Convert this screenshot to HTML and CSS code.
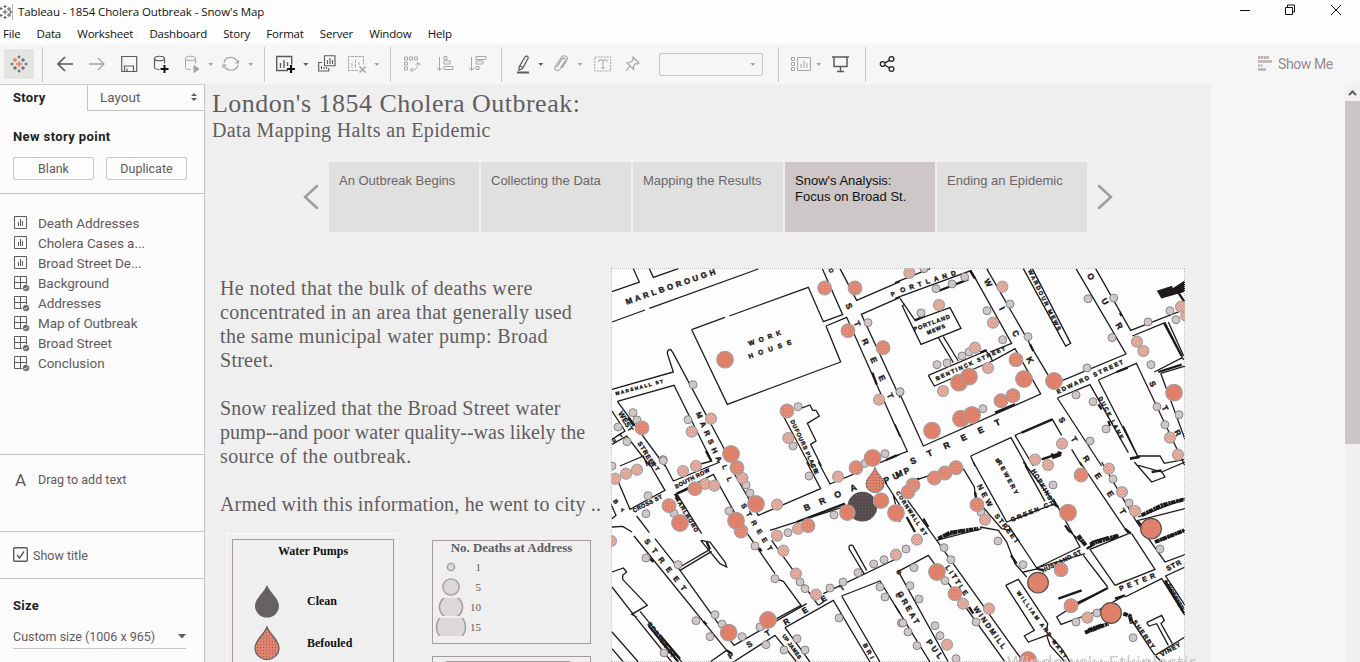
FILE: index.html
```html
<!DOCTYPE html>
<html lang="en">
<head>
<meta charset="utf-8">
<title>Tableau - 1854 Cholera Outbreak - Snow's Map</title>
<link rel="stylesheet" href="styles.css">
</head>
<body>
<svg width="0" height="0" class="defs">
  <symbol id="sheet" viewBox="0 0 17 17"><path d="M1.5 1.5h12v12h-12zM5.5 7v4M7.5 4v7M9.5 6v5"/></symbol>
  <symbol id="dash" viewBox="0 0 17 17"><path d="M1.5 1.5h12v12h-12zM7.5 1.5v12M1.5 7.5h12"/><circle cx="13" cy="13" r="3.6" fill="#666264" stroke="#fcfcfc" stroke-width=".8"/><path d="M11.3 13l1.2 1.3 2-2.5" stroke="#fcfcfc"/></symbol>
  <symbol id="caret" viewBox="0 0 6 18"><path d="M.3 8h5l-2.5 3z" fill="currentColor" stroke="none"/></symbol>
  <symbol id="tab" viewBox="0 0 18 18"><path d="M9 6v6M6 9h6M5 3v4M3 5h4" stroke="#e8765c" stroke-width="1.3"/><path d="M13 3v4M11 5h4M5 11v4M3 13h4M13 11v4M11 13h4M9 .5v3M7.500 2h3M9 14.500v3M7.500 16h3M2 7.500v3M.5 9h3M16 7.500v3M14.500 9h3" stroke="#5b5658"/></symbol>
</svg>
<header class="titlebar">
  <svg class="appicon" viewBox="0 0 14 16"><path d="M5 5.500v5M2.500 8h5M5 1v3M3.500 2.500h3M5 12v3M3.500 13.500h3M9 3v4M7 5h4M9 9v4M7 11h4M1 3v3M0 4.500h2.500M1 10v3M0 11.500h2.500M10.500 6.500v3M9.500 8h2.500"/><path d="M12.500 0v16" stroke="#b9b3b3"/></svg>
  <span class="apptitle">Tableau - 1854 Cholera Outbreak - Snow's Map</span>
  <svg class="winctl" viewBox="0 0 102 20"><path d="M0 10.500h10M45.500 7.500h7v7h-7zM47.500 7v-2h7v7h-2M91 5l10 10M101 5l-10 10"/></svg>
</header>
<nav class="menu"><span>File</span><span>Data</span><span>Worksheet</span><span>Dashboard</span><span>Story</span><span>Format</span><span>Server</span><span>Window</span><span>Help</span></nav>
<div class="toolbar">
  <div class="home"><svg class="ic"><use href="#tab"/></svg></div>
  <i class="sep"></i>
  <svg class="ic"><path d="M1 9h15M8 2L1 9l7 7" stroke-width="1.700"/></svg>
  <svg class="ic dim"><path d="M0 9h15M9 3l6 6-6 6" stroke-width="1.400"/></svg>
  <svg class="ic"><path d="M.7 1.500h15v15H.7zM3.500 16v-5h9v5M6 16v-2.500" stroke-width="1.200"/></svg>
  <svg class="ic"><path d="M1.500 3.500v9.500c1 1.300 3 1.500 5 1.500M11.500 3.500v5M1.500 3.500c0-3 10-3 10 0s-10 3-10 0z" stroke-width="1.200"/><path d="M11.500 10v8M7.500 14h8" stroke="#111" stroke-width="2"/></svg>
  <svg class="ic dim"><path d="M1.500 3.500v9.500c1 1.300 3 1.500 5 1.500M11.500 3.500v5M1.500 3.500c0-3 10-3 10 0s-10 3-10 0z"/><path d="M10 10.500l5 3.500-5 3.500z" fill="#a9a3a3"/></svg>
  <svg class="car dim"><use href="#caret"/></svg>
  <svg class="ic dim"><path d="M2 8c1-7 11-8 14 0M16 10c-2 7-12 7-14 0M13 8h3.500v-3M5 10H1v3" stroke-width="1.200"/></svg>
  <svg class="car dim"><use href="#caret"/></svg>
  <i class="sep"></i>
  <svg class="ic wide"><path d="M12 15.500H.7V1.500h15v8M4.500 8v5M8 5v8M11.500 7v4" stroke-width="1.400"/><path d="M15 10v8M11 14h8" stroke="#111" stroke-width="2.200"/></svg>
  <svg class="car"><use href="#caret"/></svg>
  <svg class="ic"><path d="M6.500.7h10.500v10h-10.500zM9.500 5v4M12 3v6M14.500 5v4M4 7.500H.7v8.500h10v-3M3.500 11v3M6 12v2M8.500 12v2" stroke-width="1.100"/></svg>
  <svg class="ic wide dim"><path d="M11 15.500H1.500V1.500h15v8M5 8v5M8.500 5v8M12 7v3" stroke-dasharray="3 .7"/><path d="M12.500 11.500l6 6M18.500 11.500l-6 6" stroke-width="1.600"/></svg>
  <svg class="car dim"><use href="#caret"/></svg>
  <i class="sep"></i>
  <svg class="ic dim"><path d="M1.500 2h3v3h-3zM6.500 2h3v3h-3zM11.500 2h3v3h-3zM1.500 7h3v3h-3zM1.500 12h3v3h-3zM8 15c5 0 7-2 7-7M12.500 10l2.500-2.500 2.500 2.500M10 12.500L7.500 15l2.500 2.500"/></svg>
  <svg class="ic dim"><path d="M3.500 2v13M1 12.500l2.500 3 2.500-3M8 1.500h3v3H8zM8 6h6v3H8zM8 11.500h9v3H8z"/></svg>
  <svg class="ic dim"><path d="M3.500 2v13M1 12.500l2.500 3 2.500-3M8 1.500h10v3H8zM8 6h7v3H8zM8 11.500h3v3H8z"/></svg>
  <i class="sep"></i>
  <svg class="ic"><path d="M4 12l6-10c1-2 4-.5 3 1.500l-5.500 10-3.500 1.500zM4.500 10.500l3.500 2" stroke-width="1.300"/><path d="M2 17.500h12" stroke-width="2"/></svg>
  <svg class="car"><use href="#caret"/></svg>
  <svg class="ic dim"><path d="M4 12l5-8c2-2 4 0 3 2l-5 8c-2 3-6 1-5-2L8 3c2-4 8-2 6 2l-5 8" stroke-width="1.200"/></svg>
  <svg class="car dim"><use href="#caret"/></svg>
  <svg class="ic dim"><path d="M.7 2h16v14H.7z" stroke-dasharray="2 1"/><path d="M5 7V5h8v2M9 5v8M7 13h4"/></svg>
  <svg class="ic dim"><path d="M9 2l6 6-1.500 1-2-.5-2 3 .2 3L3 8l3-.5 3-2zM6 11l-4 5" stroke-width="1.200"/></svg>
  <div class="combo"><svg class="car dim"><use href="#caret"/></svg></div>
  <i class="sep"></i>
  <svg class="ic wide dim"><path d="M1.500 2.500h3v3h-3zM1.500 7.500h3v3h-3zM1.500 12.500h3v3h-3zM7.500 2.500h13v13h-13zM11 9v4M14 6v7M17 8v5"/></svg>
  <svg class="car dim"><use href="#caret"/></svg>
  <svg class="ic"><path d="M0 2h17M2 2v9.500h13V2M8.500 11.500V16M5 16.500h7" stroke-width="1.500"/></svg>
  <i class="sep"></i>
  <svg class="ic share"><circle cx="3.700" cy="9" r="2.400"/><circle cx="12.500" cy="4" r="2.400"/><circle cx="12.500" cy="14" r="2.400"/><path d="M6 7.900l4.300-2.500M6 10.200l4.300 2.500"/></svg>
  <svg class="ic showic"><path d="M0 2.500h11" stroke-width="3" stroke-dasharray="2.500 .5"/><path d="M0 6.500h14" stroke-width="2.500"/><path d="M0 10.500h5" stroke-width="2" stroke-dasharray="2 .5"/><path d="M0 14.500h8" stroke-width="2.500"/></svg>
  <span class="showme">Show Me</span>
</div>
<div class="body">
  <aside class="side">
    <div class="tabs"><b>Story</b><div class="layout"><span>Layout</span><svg viewBox="0 0 6 8"><path d="M0 3l3-3 3 3zM0 5h6l-3 3z"/></svg></div></div>
    <section class="newpt"><h2>New story point</h2><div class="btns"><button>Blank</button><button>Duplicate</button></div></section>
    <ul class="sheets">
      <li><svg><use href="#sheet"/></svg>Death Addresses</li>
      <li><svg><use href="#sheet"/></svg>Cholera Cases a...</li>
      <li><svg><use href="#sheet"/></svg>Broad Street De...</li>
      <li><svg><use href="#dash"/></svg>Background</li>
      <li><svg><use href="#dash"/></svg>Addresses</li>
      <li><svg><use href="#dash"/></svg>Map of Outbreak</li>
      <li><svg><use href="#dash"/></svg>Broad Street</li>
      <li><svg><use href="#dash"/></svg>Conclusion</li>
    </ul>
    <section class="drag"><span class="bigA">A</span><span>Drag to add text</span></section>
    <section class="showtitle"><svg viewBox="0 0 16 16"><rect x=".7" y=".7" width="13.600" height="13.600" rx="1"/><path d="M4 8l2.500 3L11 4.500"/></svg><span>Show title</span></section>
    <section class="size"><h2>Size</h2><div class="select"><span>Custom size (1006 x 965)</span><svg viewBox="0 0 8 5"><path d="M0 0h8L4 4.500z"/></svg></div></section>
  </aside>
  <main class="story">
    <h1>London's 1854 Cholera Outbreak:</h1>
    <p class="sub">Data Mapping Halts an Epidemic</p>
    <div class="points">
      <svg class="chev" viewBox="0 0 16 26"><path d="M14 2L2 13l12 11"/></svg>
      <div class="pt">An Outbreak Begins</div><div class="pt">Collecting the Data</div><div class="pt">Mapping the Results</div><div class="pt on">Snow's Analysis:<br>Focus on Broad St.</div><div class="pt">Ending an Epidemic</div>
      <svg class="chev" viewBox="0 0 16 26"><path d="M2 2l12 11L2 24"/></svg>
    </div>
    <div class="content">
      <div class="left">
        <div class="prose">
          <p><span class="s4">He noted that the bulk of deaths were</span><br><span class="s3">concentrated in an area that generally used</span><br><span class="s4">the same municipal water pump: Broad</span><br><span class="s3">Street.</span></p>
          <p><span class="s2">Snow realized that the Broad Street water</span><br><span class="s1">pump--and poor water quality--was likely the</span><br><span class="s4">source of the outbreak.</span></p>
          <p><span class="s2">Armed with this information, he went to city ..</span></p>
        </div>
        <div class="legends">
          <div class="pumps"><div class="inner"><h3>Water Pumps</h3>
            <div class="row"><svg viewBox="0 0 26 34"><path d="M13 1C10 9 1 14 1 22a12 11.500 0 0 0 24 0C25 14 16 9 13 1z" fill="#666264"/></svg><span>Clean</span></div>
            <div class="row"><svg viewBox="0 0 26 34"><path d="M13 1C10 9 1 14 1 22a12 11.500 0 0 0 24 0C25 14 16 9 13 1z" fill="url(#foul)" stroke="#666264" stroke-width="1.300"/></svg><span>Befouled</span></div>
          </div></div>
          <div class="rightleg">
            <div class="deaths"><h3>No. Deaths at Address</h3>
              <div class="drow"><svg viewBox="0 0 32 20"><circle cx="16" cy="10" r="4"/></svg><span>1</span></div>
              <div class="drow"><svg viewBox="0 0 32 20"><circle cx="16" cy="10" r="9"/></svg><span>5</span></div>
              <div class="drow"><svg viewBox="0 1 32 18"><circle cx="16" cy="10" r="11.500"/></svg><span>10</span></div>
              <div class="drow"><svg viewBox="0 1 32 18"><circle cx="16" cy="10" r="14.500"/></svg><span>15</span></div>
            </div>
            <div class="next"><i></i></div>
          </div>
        </div>
      </div>
      <svg class="map" viewBox="611 268 574 394">
        <defs>
          <pattern id="mix" width="9" height="9" patternUnits="userSpaceOnUse"><rect width="9" height="9" fill="#e4927f"/><path d="M0 0h4v4H0zM4.500 4.500h4v4h-4z" fill="#ddd0cc"/></pattern>
          <pattern id="dots" width="9" height="9" patternUnits="userSpaceOnUse"><rect width="9" height="9" fill="#df806a"/><path d="M0 0h3v3H0zM4.500 4.500h3v3h-3z" fill="#eba594"/></pattern>
          <pattern id="foul" width="3" height="3" patternUnits="userSpaceOnUse"><rect width="3" height="3" fill="#e2826c"/><path d="M0 0h1v1H0z" fill="#8d6660"/></pattern>
          <pattern id="dk" width="9" height="9" patternUnits="userSpaceOnUse"><rect width="9" height="9" fill="#4c4849"/><path d="M0 0h3v3H0zM4.500 4.500h3v3h-3z" fill="#80655f"/></pattern>
        </defs>
        <g class="lines">
          <g transform="translate(610 266) scale(.33333)">
            <path d="M6 77L88 48L70 8M118 8L130 34L205 8M6 168L105 132M118 127L445 9M245 191L345 154M358 150L595 64L640 167L698 146L637 8M648 180L710 154L870 512M648 180L692 288L352 415L245 191M690 8L740 103L870 47M870 94L754 145L870 395M6 370L190 318L172 262Q172 250 182 250L190 262L370 600M22 406L192 358L305 585L250 600M22 406L165 600M6 435L45 495L6 520M6 535L50 510L120 600M30 600L100 570L112 600M520 450L600 600M570 428L600 417L608 433L618 433L628 450L592 472L618 525L602 535L634 600M810 590L870 565"/>
            <path class="thick" d="M787 320L800 355M288 555L303 583M828 582L860 568M55 455L72 480"/>
          </g>
          <g transform="translate(895 266) scale(.33333)">
            <path d="M0 50L105 8M0 97L228 14L350 232L285 258M275 8L400 225L410 245L462 332M15 97L60 163L165 125L198 187L78 235L22 120L30 115M130 215L175 290M145 212L190 285M100 328L272 255L285 268M100 328L118 360L292 285M285 268L292 285L360 248L437 384L85 540L15 385M385 8L512 240L527 232L412 8M543 8L693 264L487 350M602 8L707 193L870 130M712 210L810 170L866 282M820 168L866 270M862 275L778 318M487 396L585 356L700 560M487 396L620 600M610 342L724 292L870 600M610 342L730 575L705 580M685 480L728 570M360 508L472 460L500 508M530 550L560 600M360 508L415 600M227 570L348 515L395 600M227 570L240 600M0 570L37 556L0 475M730 570L795 570L808 592L870 580M797 322L870 520M797 322L870 300"/>
            <path class="thick" d="M130 75L220 40M380 500L472 460M60 163L90 150M790 318L860 296M665 318L698 305M405 235L415 255M675 140L680 150M610 415L620 430M808 172L860 270M440 580L500 560M470 562L475 575L495 568L490 556M705 577L735 572M255 260L275 252M640 465L645 480M300 440L360 415M225 14L240 38M850 80L870 110"/>
            <path class="blot" d="M788 75L830 62L832 70L870 45V75L800 95z"/>
          </g>
          <g transform="translate(610 462) scale(.33333)">
            <path d="M25 60L60 142L165 85L115 0M0 120L18 160L6 170M160 0L190 57L330 0M200 95L310 37L395 190L495 335M495 350L520 358L573 430L500 470M370 30L445 160L632 80L590 0M625 0L660 66L735 35M200 95L275 215M80 162L118 212M6 195L38 193L66 210M72 222L350 565L300 600M135 230L210 325L372 550L590 425M210 325L305 268M215 312L300 262M272 235L330 305L350 315L345 300L300 240L272 235M480 205L700 135L760 112M485 235L625 430M640 420L625 430M6 330L40 318L50 330L38 340L38 352L112 430L65 457L80 465M6 375L70 457L185 600M90 448L215 600M6 510L85 600M6 560L40 600M370 600L495 520L560 600M525 497L670 415L780 600M525 497L600 600M695 402L810 357L870 455M695 402L810 600M762 335L718 262Q714 246 728 250L770 325M640 395L870 285M870 130L825 60M850 100L870 180"/>
            <path class="thick" d="M560 180L705 125M200 95L270 65M195 95L205 115M290 240L300 262M115 490L205 600M150 520L210 590M350 565L365 575M120 290L130 300M280 478L290 488M447 258L455 268"/>
          </g>
          <g transform="translate(895 462) scale(.33333)">
            <path d="M60 55L200 8M205 20L238 75L242 110L320 200L345 205M235 0L335 180L480 125L385 0M340 190L425 318L555 255L475 110M390 10L450 118M38 115L125 235L260 200M255 195L310 205L335 240L360 305L395 345M555 0L700 215L585 262L660 370M620 0L725 180L810 300L870 278M710 215L780 322L660 370L695 355M565 280L638 375M425 318L570 275M540 425L640 378M540 430L485 465L498 487L600 450L690 400M690 405L800 350L870 460M870 315L812 342L870 430M730 165L870 110M730 175L870 140M780 240L870 205M718 0L770 60L810 45L800 30L730 10M800 30L870 0M125 235L385 600M10 328L100 280L330 600M10 328L160 600M0 430L105 600M332 370L370 352L458 485L455 510L500 560L525 600M332 370L418 505L388 522L400 540L455 520L465 550L510 600M755 482L800 460L808 475L798 485L832 545M755 482L762 492L785 485L820 550M870 525L780 580L800 600M700 460L780 580M385 330L430 320M515 200L570 250"/>
            <path class="thick" d="M85 170L100 195M35 165L60 210M240 90L244 110M348 280L365 305M222 435L235 455M490 410L560 385M660 410L690 400M590 240L640 225M690 200L708 215M575 260L600 245M645 235L670 220M540 430L638 378M810 355L868 455M770 30L800 25M425 320L445 325M725 175L740 190M60 55L72 50M475 125L490 135M510 190L525 210"/>
            <path class="ink" d="M130 230L165 212L250 200M150 220L200 206M585 247L670 220M740 160L800 130L868 112M780 240L868 205M570 512L640 485M580 505L620 490M685 455L705 462L710 485M550 220L572 250"/>
          </g>
        </g>
        <g id="labels"></g>
        <g id="cases"></g>
        <path d="M875 467.500C873 474 866 478 866 484a9 8.500 0 0 0 18 0C884 478 877 474 875 467.500z" fill="url(#foul)" stroke="#777072"/>
      </svg>
    </div>
  </main>
  <div class="scroll"><svg viewBox="0 0 15 17"><path d="M4 11l3.500-3.500L11 11"/></svg><div class="thumb"></div></div>
  <div class="watermark">Windows'u Etkinleştir</div>
</div>
<script src="map.js"></script>
</body>
</html>
```
FILE: map.js
```js
const NS = 'http://www.w3.org/2000/svg';
const origins = { A: [610, 266], B: [895, 266], C: [610, 462], D: [895, 462] };

function make(parent, name, attrs) {
  const el = document.createElementNS(NS, name);
  for (const k in attrs) el.setAttribute(k, attrs[k]);
  parent.appendChild(el);
  return el;
}
function sheet(id, q) {
  const [x, y] = origins[q];
  return make(document.getElementById(id), 'g', { transform: `translate(${x} ${y}) scale(.33333)` });
}

/* Street names: text, start x, start y, end x, end y, size */
const labels = {
  A: [['MARLBOROUGH', 50, 116, 318, 24, 24], ['WORK', 418, 240, 515, 206, 20], ['HOUSE', 418, 278, 546, 234, 20],
    ['STREET', 706, 116, 836, 400, 25], ['O', 654, 12, 664, 24, 18], ['P', 845, 92, 860, 86, 18], ['MARSHALL ST', 18, 388, 160, 350, 14],
    ['WEST', 24, 442, 58, 498, 22], ['STREET', 82, 532, 128, 606, 19], ['MARSHA', 257, 442, 322, 590, 22], ['DUFOURS PLACE', 541, 465, 614, 620, 17], ['ST', 10, 530, 40, 510, 17]],
  B: [['ORTLAND', 18, 80, 184, 26, 20], ['WICK', 266, 44, 402, 294, 25], ['WARDOUR MEWS', 398, 14, 488, 195, 17], ['OUR', 575, 28, 670, 192, 25],
    ['PORTLAND', 58, 196, 166, 156, 17], ['MEWS', 98, 206, 152, 184, 16], ['BENTINCK STREET', 125, 344, 332, 252, 17],
    ['EDWARD STREET', 488, 384, 686, 292, 18], ['DUCK LANE', 610, 396, 676, 520, 17], ['STR', 490, 460, 572, 590, 24], ['STR', 762, 350, 845, 512, 24],
    ['STREET', 50, 596, 318, 474, 26], ['B', 300, 582, 308, 594, 16]],
  C: [['BROA', 586, 148, 742, 82, 26], ['PU', 826, 66, 870, 46, 26], ['STREET', 102, 238, 218, 388, 22], ['LL', 336, 12, 354, 60, 20],
    ['STREET', 392, 130, 476, 268, 21], ['SOUTH ROW', 198, 80, 300, 28, 17], ['CROSS ST', 72, 152, 158, 108, 17], ['MARLBORO', 194, 108, 256, 212, 17],
    ['PSTREET', 360, 592, 706, 380, 24], ['UP JAMES', 516, 522, 566, 592, 16], ['BRI', 758, 548, 782, 592, 18], ['ET', 122, 4, 140, 28, 17],
    ['CE', 600, 8, 616, 38, 16], ['B', 8, 118, 18, 130, 18], ['Y', 30, 148, 40, 152, 15], ['PORTER ST', 112, 486, 186, 588, 18], ['G', 858, 326, 864, 340, 18], ['C', 856, 396, 862, 410, 18]],
  D: [['NEW', 246, 72, 280, 135, 22], ['STREET', 298, 162, 362, 245, 20], ['REWERY', 306, 0, 360, 98, 18], ['HOPKINS', 408, 26, 462, 116, 19],
    ['MP', 5, 48, 46, 32, 26], ['EET', 598, 40, 680, 160, 25], ['LITTLE', 150, 316, 208, 402, 21], ['WINDMILL', 234, 440, 322, 562, 22], ['GREAT', 6, 394, 60, 488, 23],
    ['PUL', 92, 540, 132, 592, 24], ['WILLIAM AND MARY', 364, 392, 508, 590, 16], ['HUSBAND ST', 444, 332, 560, 274, 18],
    ['PETER', 676, 388, 782, 346, 21], ['STR', 818, 328, 860, 306, 21], ['GREEN CT', 350, 180, 478, 128, 19], ['CORNWALL ST', 2, 92, 88, 222, 16],
    ['VINEY', 800, 584, 858, 552, 19], ['SHERRY', 712, 480, 770, 562, 19], ['LEICESTER', 808, 360, 858, 446, 17]]
};

/* Addresses as x, y pairs; radius follows the number of deaths */
const cases = {
  small: {
    A: [774,170, 249,356, 69,440, 81,462, 24,483, 51,527, 234,461, 564,422, 549,540, 159,581, 825,563, 870,378, 765,592],
    B: [87,8, 123,68, 171,54, 209,33, 78,141, 345,114, 276,134, 323,221, 399,212, 222,258, 201,270, 156,291, 126,296, 264,428, 15,377, 579,98, 656,96, 651,215, 759,168, 825,134, 843,161, 768,296, 576,306, 543,387, 594,407, 633,489, 585,525, 786,422, 810,476, 852,446],
    C: [114,101, 108,155, 192,154, 357,147, 408,69, 420,93, 534,212, 435,252, 108,288, 204,308, 495,350, 570,360, 585,380, 660,378, 699,360, 744,332, 791,306, 822,293, 810,375, 825,405, 597,42, 672,159, 687,468, 315,458, 258,476, 336,486, 300,524, 396,524, 450,495, 468,548, 522,564, 585,564, 561,530, 162,573, 874,483, 160,-4, 6,12],
    D: [474,69, 654,51, 702,123, 795,261, 258,150, 309,237, 384,308, 147,257, 168,293, 33,261, 57,317, 45,371, 72,411, 150,356, 243,480, 120,491, 135,521, 183,590, 24,483, 39,510, 66,551, 543,480, 606,453, 714,527]
  },
  mid: {
    A: [807,401, 303,458, 245,497, 535,516],
    B: [43,21, 132,117, 322,62, 294,170, 240,245, 279,306, 144,375, 726,227, 745,255, 858,122, 874,150, 825,515, 849,566, 501,533, 420,581, 459,597],
    C: [3,237, 15,50, 48,35, 81,23, 219,27, 258,12, 285,66, 313,71, 397,48, 501,128, 501,221, 564,200, 520,266, 558,335, 618,398, 684,44, 858,278],
    D: [642,20, 681,90, 720,147, 270,173, 66,233, 204,425, 282,440, 577,467, 156,548]
  },
  large: {
    A: [644,66, 735,66, 714,194, 819,245, 96,486, 531,435],
    B: [363,281, 318,404, 354,389],
    C: [381,17, 255,80, 177,131, 393,207, 594,191, 738,17],
    D: [183,17, 150,33, 118,48, 54,69, 39,90, 246,128, 558,39, 180,395, 498,323, 528,431]
  },
  xlarge: {
    A: [345,281, 363,564, 788,576],
    B: [192,350, 222,332, 387,339, 477,345, 198,458, 231,447, 111,494, 837,380],
    C: [210,183, 438,126, 378,176, 474,474, 356,512, 858,153],
    D: [519,152, 126,330, 399,594]
  },
  most: { D: [768,200, 429,362, 648,453] },
  dark: { C: [757,134] },
  near: { C: [712,152, 813,116] }
};
const radius = { small: 12, mid: 16.5, large: 20.5, xlarge: 25, most: 31, dark: 43, near: 23 };

for (const q in labels) {
  const g = sheet('labels', q);
  for (const [t, x1, y1, x2, y2, size] of labels[q]) {
    const angle = Math.atan2(y2 - y1, x2 - x1) * 180 / Math.PI;
    const attrs = { transform: `translate(${x1} ${y1}) rotate(${angle})`, 'font-size': size };
    if (t.length > 1) attrs.textLength = Math.hypot(x2 - x1, y2 - y1);
    make(g, 'text', attrs).textContent = t;
  }
}
for (const kind in cases) {
  for (const q in cases[kind]) {
    const g = sheet('cases', q);
    const pts = cases[kind][q];
    for (let i = 0; i < pts.length; i += 2) make(g, 'circle', { class: kind, cx: pts[i], cy: pts[i + 1], r: radius[kind] });
  }
}
```
FILE: styles.css
```css
* { box-sizing: border-box; }
body { margin: 0; width: 1360px; height: 662px; overflow: hidden; background: #fdfdfd; color: #555052; font-family: Roboto, "Open Sans", sans-serif; }
.defs { position: absolute; }
svg { fill: none; stroke: #5f5a5c; display: block; }
pattern { stroke: none; }
h1, h2, h3, p, ul { margin: 0; padding: 0; font-weight: normal; }

.titlebar { height: 24px; display: flex; align-items: center; }
.appicon { width: 14px; height: 16px; }
.apptitle { margin: -2px 0 0 4px; font: 11.5px "Open Sans", sans-serif; color: #111; letter-spacing: -.1px; flex: 1; }
.winctl { width: 102px; height: 20px; margin-right: 18px; stroke: #111; margin-top: -4px; }
.menu { height: 20px; display: flex; align-items: center; gap: 16.2px; padding: 0 0 2px 3px; font: 11.5px "Open Sans", sans-serif; letter-spacing: -.2px; color: #111; }

.toolbar { height: 40px; background: #f6f6f6; padding-left: 4px; display: grid; align-items: center; grid-template-columns: 38px 15px 32px 32px 32px 31px 24px 14px 26px 16px 12px 27px 15px 29px 27px 16px 13px 33px 32px 33px 14px 23px 15px 24px 17px 30px 35px 119px 12px 26px 16px 33px 14px 379px 20px 82px; }
.home { width: 30px; height: 30px; background: #e4e4e2; display: grid; place-items: center; }
.ic { width: 18px; height: 18px; overflow: visible; }
.ic.wide { width: 21px; }
.dim { stroke: #aaa4a4; color: #aaa4a4; }
.car { width: 6px; height: 18px; color: #5f5a5c; }
.car.dim { color: #aaa4a4; }
.sep { width: 1px; height: 35px; background: #cbc6c6; }
.combo { width: 104px; height: 23px; border: 1px solid #cbc6c6; border-radius: 2px; display: flex; justify-content: flex-end; align-items: center; padding-right: 6px; }
.share { stroke: #222; stroke-width: 1.3; }
.showic { stroke: #b9b1b1; }
.showme { font-size: 14px; letter-spacing: -.4px; color: #938c8d; }

.body { position: relative; height: 578px; display: flex; background: #f6f6f6; }
.side { width: 205px; background: #fcfcfc; border-right: 1px solid #c9c4c4; font-size: 13.5px; color: #5f5a5c; }
.tabs { height: 27px; display: flex; border-top: 1px solid #d0cbcb; }
.tabs b { width: 87px; padding: 5px 0 0 13px; font-size: 13px; line-height: 16px; letter-spacing: .3px; color: #222; }
.layout { flex: 1; border: solid #c9c4c4; border-width: 0 0 1px 1px; display: flex; justify-content: space-between; align-items: center; padding: 0 7px 2px 12px; }
.layout svg { width: 6px; height: 8px; fill: #5f5a5c; stroke: none; }
.side h2 { font-size: 13px; line-height: 16px; font-weight: bold; color: #222; }
.newpt { height: 83px; padding: 18px 13px 0; border-bottom: 1px solid #c9c4c4; }
.newpt h2 { letter-spacing: .4px; }
.btns { display: flex; gap: 12px; margin-top: 12px; }
.btns button { width: 81px; height: 23px; padding: 0; border: 1px solid #cbc6c6; border-radius: 2px; background: #fdfdfd; font: 12.5px Roboto, sans-serif; color: #5f5a5c; }
.sheets { list-style: none; height: 261px; padding: 19px 0 0 13px; border-bottom: 1px solid #c9c4c4; }
.sheets li { height: 20px; display: flex; align-items: center; gap: 8px; letter-spacing: -.06px; }
.sheets svg { width: 17px; height: 17px; }
.drag { height: 77px; padding: 16px 0 0 15px; display: flex; gap: 12px; font-size: 12.5px; line-height: 18px; border-bottom: 1px solid #c9c4c4; }
.bigA { font-size: 17px; width: 11px; }
.showtitle { height: 47px; display: flex; align-items: center; gap: 4px; padding-left: 13px; font-size: 12.5px; border-bottom: 1px solid #c9c4c4; }
.showtitle svg { width: 16px; height: 16px; stroke-width: 1.4; }
.size { padding: 19px 0 0 13px; }
.select { width: 173px; height: 24px; margin-top: 11px; display: flex; justify-content: space-between; align-items: center; border-bottom: 1px solid #c9c4c4; font-size: 12.5px; }
.select svg { width: 8px; height: 5px; fill: #5f5a5c; stroke: none; }
.size h2 { letter-spacing: .3px; }

.story { width: 1006px; background: #efefef; overflow: hidden; color: #625d5f; }
.story h1 { font: 26px/32px "Liberation Serif", serif; height: 35px; padding: 4px 0 0 7px; letter-spacing: .48px; white-space: nowrap; }
.sub { font: 20px/22px "Liberation Serif", serif; height: 23px; padding-left: 7px; letter-spacing: .37px; }
.points { display: flex; align-items: center; gap: 2px; margin: 20px 0 0 98px; height: 70px; }
.chev { width: 16px; height: 26px; stroke: #a39b9c; stroke-width: 2.5; stroke-linecap: round; }
.chev:first-child { margin-right: 8px; }
.chev:last-child { margin-left: 8px; }
.pt { width: 150px; height: 70px; background: #e0e0de; padding: 11px 10px; font: 13px/16px "Liberation Sans", sans-serif; color: #6b6668; white-space: nowrap; }
.pt.on { background: #cdc7c7; color: #111; }
.content { display: flex; margin-top: 36px; }
.left { width: 406px; height: 394px; }
.prose { padding: 8px 0 0 15px; font: 20px/24px "Liberation Serif", serif; height: 265px; white-space: nowrap; }
.prose p { margin-bottom: 24px; }
.prose p:last-child { margin: 0; }
.s1 { letter-spacing: .03px; }
.s2 { letter-spacing: .18px; }
.s3 { letter-spacing: .26px; }
.s4 { letter-spacing: .36px; }
.legends { display: flex; }
.pumps { width: 171px; height: 140px; margin-left: 22px; border: 1px solid #fcfcfc; padding: 5px 4px; }
.inner { height: 140px; width: 162px; border: 1px solid #a39b9c; color: #111; }
.legends h3 { text-align: center; font: bold 12px/16px "Liberation Serif", serif; }
.inner h3 { padding-top: 3px; }
.inner .row { height: 42px; display: flex; align-items: center; font: bold 12px "Liberation Serif", serif; }
.inner h3 + .row { margin-top: 21px; }
.row svg { width: 26px; height: 34px; margin: 0 27px 0 21px; stroke: none; }
.rightleg { margin-left: 34px; padding-top: 7px; }
.deaths { width: 159px; height: 104px; border: 1px solid #a39b9c; }
.deaths h3 { font-size: 13px; line-height: 14px; margin-bottom: 2px; letter-spacing: -.05px; }
.drow { display: flex; align-items: center; height: 20px; font: 11px "Liberation Serif", serif; }
.drow svg { width: 32px; height: 18px; margin-left: 2px; fill: #dcd8d7; stroke: #a59d9e; stroke-width: 1.6; }
.drow span { width: 14px; text-align: right; }
.next { width: 159px; height: 30px; margin-top: 12px; border: 1px solid #a39b9c; padding: 4px 20px 0 13px; }
.next i { display: block; height: 2px; background: #a39b9c; }

.map { width: 574px; height: 394px; background: #fdfdfd; outline: 1px dotted #c4bebe; outline-offset: -1px; }
.lines path { stroke: #1d1a1b; stroke-width: 3.9; }
.lines .thick { stroke-width: 7; }
.lines .ink { stroke-width: 12; stroke-dasharray: 14 2 7 1; }
.lines .blot { fill: #1d1a1b; }
#labels text { font-family: "Liberation Sans", sans-serif; font-weight: bold; fill: #1d1a1b; stroke: #1d1a1b; stroke-width: 1.2; }
#cases circle { stroke: #a59fa0; stroke-width: 3.4; }
#cases .small { fill: #cdc7c7; stroke: #7d7778; stroke-width: 2.6; }
#cases .mid { fill: url(#mix); }
#cases .large { fill: url(#dots); }
#cases .xlarge, #cases .near { fill: #df806a; }
#cases .most { fill: #df806a; stroke: #4f4a4b; }
#cases .dark { fill: url(#dk); stroke: #555051; }

.scroll { position: relative; margin-left: auto; width: 15px; background: #f0f0f0; }
.scroll svg { width: 15px; height: 17px; stroke-width: 2; }
.thumb { height: 343px; background: #cbc5c5; }
.watermark { position: absolute; left: 1007px; top: 564px; font: 19px/28px "Open Sans", sans-serif; color: #cbc7c7; white-space: nowrap; }
```
